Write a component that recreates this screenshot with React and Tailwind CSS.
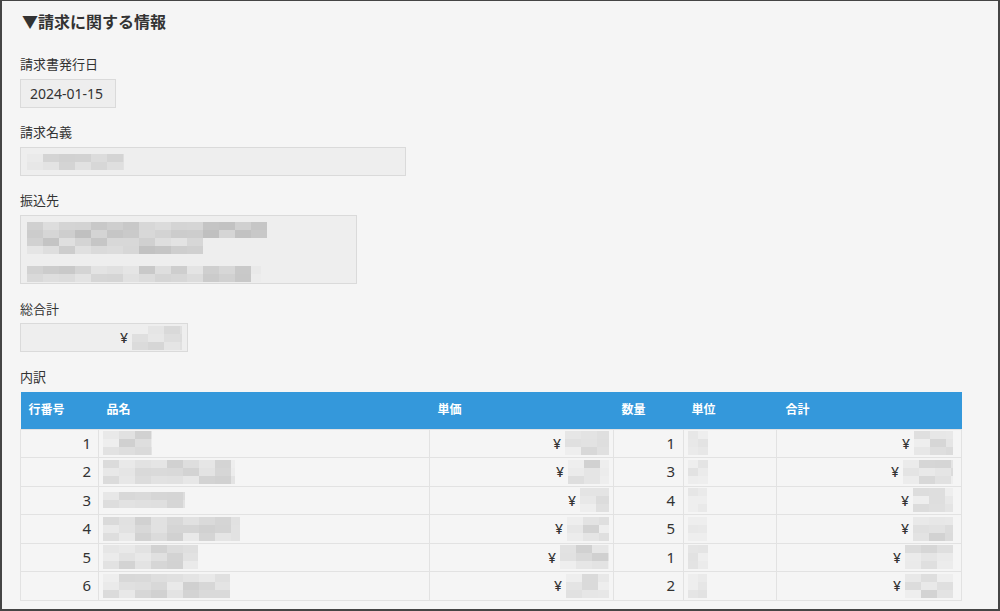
import React from "react";

function makeRnd(seed) {
  let s = seed;
  return () => {
    s = (s * 9301 + 49297) % 233280;
    return s / 233280;
  };
}

function Mosaic({ w, h = 16, seed = 1, cw = 16, ch = 8, lo = 0xd0, range = 26 }) {
  const rnd = makeRnd(seed * 97 + 13);
  const cols = Math.ceil(w / cw);
  const rows = Math.ceil(h / ch);
  const cells = [];
  for (let r = 0; r < rows; r++) {
    for (let c = 0; c < cols; c++) {
      const v = lo + Math.floor(rnd() * range);
      const edge = c === 0 || c === cols - 1;
      const g = Math.min(0xee, edge ? v + 10 : v);
      const hex = g.toString(16).padStart(2, "0");
      cells.push(
        <div
          key={r + "-" + c}
          style={{
            width: c === cols - 1 ? w - cw * (cols - 1) : cw,
            height: ch,
            backgroundColor: `#${hex}${hex}${hex}`,
          }}
        />
      );
    }
  }
  return (
    <div className="inline-flex flex-wrap align-middle" style={{ width: w, height: rows * ch }}>
      {cells}
    </div>
  );
}

const rows = [
  { n: 1, name: [49, 1], price: [44, 2], qty: 1, unit: [20, 3], total: [39, 4] },
  { n: 2, name: [132, 5], price: [41, 6], qty: 3, unit: [20, 7], total: [50, 8] },
  { n: 3, name: [82, 9], price: [29, 10], qty: 4, unit: [19, 11], total: [40, 12], oneRow: true },
  { n: 4, name: [137, 13], price: [42, 14], qty: 5, unit: [19, 15], total: [40, 16] },
  { n: 5, name: [95, 17], price: [49, 18], qty: 1, unit: [20, 19], total: [48, 20] },
  { n: 6, name: [127, 21], price: [43, 22], qty: 2, unit: [19, 23], total: [48, 24] },
];

const headCls = "text-left text-white text-[12px] font-bold px-2 align-middle";
const cellCls = "border border-[#e2e2e2] align-middle";

export default function App() {
  return (
    <div
      className="w-[1000px] h-[611px] bg-[#f5f5f5] border-[#454545] border-t border-l-2 border-r-2 border-b-2 overflow-hidden text-[#333]"
      style={{ fontFamily: '"Noto Sans", "Noto Sans CJK JP", sans-serif' }}
    >
      <div className="pl-[18px]">
        <div className="mt-[11px] h-[20px] leading-[20px] text-[16px] font-bold pl-[2px] text-[#333]">
          ▼請求に関する情報
        </div>

        <div className="mt-[22px] h-[20px] leading-[20px] text-[13px]">請求書発行日</div>
        <div className="mt-[5px] w-[96px] h-[29px] bg-[#eeeeee] border border-[#dadada] flex items-center pl-[9px] text-[14px]">
          2024-01-15
        </div>

        <div className="mt-[14px] h-[20px] leading-[20px] text-[13px]">請求名義</div>
        <div className="mt-[5px] w-[386px] h-[29px] bg-[#eeeeee] border border-[#dadada] flex items-center pl-[6px]">
          <Mosaic w={97} h={16} seed={31} />
        </div>

        <div className="mt-[14px] h-[20px] leading-[20px] text-[13px]">振込先</div>
        <div className="mt-[5px] w-[337px] h-[69px] bg-[#eeeeee] border border-[#dadada] flex flex-col pl-[6px] pt-[6px]">
          <Mosaic w={240} h={16} seed={41} lo={0xbc} range={34} />
          <Mosaic w={176} h={16} seed={42} lo={0xc2} range={34} />
          <div className="mt-[6px]">
            <Mosaic w={234} h={16} seed={43} lo={0xc8} range={30} />
          </div>
        </div>

        <div className="mt-[15px] h-[20px] leading-[20px] text-[13px]">総合計</div>
        <div className="mt-[4px] w-[168px] h-[29px] bg-[#eeeeee] border border-[#dadada] flex items-center justify-end pr-[5px] gap-[4px] text-[14px]">
          <span className="font-medium">¥</span>
          <Mosaic w={50} h={24} seed={51} />
        </div>

        <div className="mt-[15px] h-[20px] leading-[20px] text-[13px]">内訳</div>
        <table className="mt-[5px] border-collapse table-fixed w-[941px]">
          <colgroup>
            <col className="w-[78px]" />
            <col className="w-[331px]" />
            <col className="w-[184px]" />
            <col className="w-[70px]" />
            <col className="w-[93px]" />
            <col className="w-[185px]" />
          </colgroup>
          <thead>
            <tr className="bg-[#3498db] h-[37px]">
              <th className={headCls}>行番号</th>
              <th className={headCls}>品名</th>
              <th className={headCls}>単価</th>
              <th className={headCls}>数量</th>
              <th className={headCls}>単位</th>
              <th className={headCls + " pl-[9px]"}>合計</th>
            </tr>
          </thead>
          <tbody>
            {rows.map((r) => (
              <tr key={r.n} className="h-[28.5px]">
                <td className={cellCls + " text-right pr-[7px] text-[15px] leading-none"}>{r.n}</td>
                <td className={cellCls + " pl-[4px]"}>
                  <div className="flex">
                    <Mosaic w={r.name[0]} h={r.oneRow ? 16 : 24} seed={r.name[1]} />
                  </div>
                </td>
                <td className={cellCls + " pr-[4px]"}>
                  <div className="flex justify-end items-center gap-[4px] text-[14px]">
                    <span className="font-medium">¥</span>
                    <Mosaic w={r.price[0]} h={24} seed={r.price[1]} />
                  </div>
                </td>
                <td className={cellCls + " text-right pr-[8px] text-[15px] leading-none"}>{r.qty}</td>
                <td className={cellCls + " pl-[4px]"}>
                  <div className="flex">
                    <Mosaic w={r.unit[0]} h={24} cw={10} seed={r.unit[1]} lo={0xd8} range={18} />
                  </div>
                </td>
                <td className={cellCls + " pr-[8px]"}>
                  <div className="flex justify-end items-center gap-[4px] text-[14px]">
                    <span className="font-medium">¥</span>
                    <Mosaic w={r.total[0]} h={24} seed={r.total[1]} />
                  </div>
                </td>
              </tr>
            ))}
          </tbody>
        </table>
      </div>
    </div>
  );
}
